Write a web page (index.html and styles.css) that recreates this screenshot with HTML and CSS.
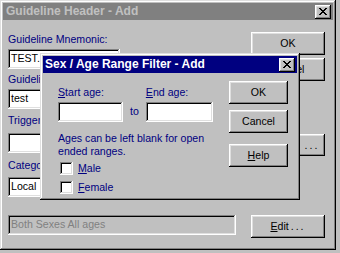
FILE: index.html
```html
<!DOCTYPE html>
<html lang="en">
<head>
    <meta charset="UTF-8">
    <title>Guideline Header - Add</title>
    <link rel="stylesheet" href="styles.css">
</head>
<body>
    <div class="window main-window">
        <div class="titlebar inactive">
            <span class="title">Guideline Header - Add</span>
            <span class="close-btn"><svg width="8" height="7" viewBox="0 0 8 7"><path d="M0 0h2v1H0zM6 0h2v1H6zM1 1h2v1H1zM5 1h2v1H5zM2 2h4v1H2zM3 3h2v1H3zM2 4h4v1H2zM1 5h2v1H1zM5 5h2v1H5zM0 6h2v1H0zM6 6h2v1H6z" fill="#000"/></svg></span>
        </div>
        <div class="main-body">
            <div class="top-section">
                <div class="fields">
                    <div class="label first">Guideline Mnemonic:</div>
                    <div class="textbox mnemonic">TEST.</div>
                    <div class="label">Guideline Description:</div>
                    <div class="textbox description">test</div>
                </div>
                <div class="side-buttons">
                    <div class="btn">OK</div>
                    <div class="btn cancel">Cancel</div>
                </div>
            </div>
            <div class="label trigger-label">Trigger:</div>
            <div class="trigger-row">
                <div class="textbox trigger"></div>
                <div class="btn dots"><span class="spaced">...</span></div>
            </div>
            <div class="label category-label">Category:</div>
            <div class="textbox combo">Local</div>
            <div class="filter-row">
                <div class="textbox disabled">Both Sexes All ages</div>
                <div class="btn"><u>E</u>dit<span class="spaced">...</span></div>
            </div>
        </div>
    </div>

    <!-- Sex / Age filter dialog -->
    <div class="window filter-window">
        <div class="titlebar">
            <span class="title">Sex / Age Range Filter - Add</span>
            <span class="close-btn"><svg width="8" height="7" viewBox="0 0 8 7"><path d="M0 0h2v1H0zM6 0h2v1H6zM1 1h2v1H1zM5 1h2v1H5zM2 2h4v1H2zM3 3h2v1H3zM2 4h4v1H2zM1 5h2v1H1zM5 5h2v1H5zM0 6h2v1H0zM6 6h2v1H6z" fill="#000"/></svg></span>
        </div>
        <div class="filter-body">
            <div class="filter-fields">
                <div class="age-row">
                    <div class="age-group start">
                        <div class="label"><u>S</u>tart age:</div>
                        <div class="textbox age-input"></div>
                    </div>
                    <div class="label to">to</div>
                    <div class="age-group end">
                        <div class="label"><u>E</u>nd age:</div>
                        <div class="textbox age-input"></div>
                    </div>
                </div>
                <div class="label note">Ages can be left blank for open ended ranges.</div>
                <div class="check-row">
                    <span class="checkbox"></span>
                    <span class="label"><u>M</u>ale</span>
                </div>
                <div class="check-row second">
                    <span class="checkbox"></span>
                    <span class="label"><u>F</u>emale</span>
                </div>
            </div>
            <div class="filter-buttons">
                <div class="btn">OK</div>
                <div class="btn cancel">Cancel</div>
                <div class="btn help"><u>H</u>elp</div>
            </div>
        </div>
    </div>
</body>
</html>
```

FILE: styles.css
```css
* {
    box-sizing: border-box;
}

body {
    margin: 0;
    width: 340px;
    height: 253px;
    overflow: hidden;
    position: relative;
    background-color: #c0c0c0;
    font-family: 'Liberation Sans', Arial, sans-serif;
    font-size: 10.6px;
    line-height: 13px;
    color: #000;
}

/* Window frames */
.window {
    position: absolute;
    background-color: #c0c0c0;
    padding: 3px;
    box-shadow: inset -1px -1px #000, inset 1px 1px #dfdfdf, inset -2px -2px #808080, inset 2px 2px #fff;
}

.main-window {
    left: 0;
    top: 0;
    width: 336px;
    height: 250px;
}

.filter-window {
    left: 40px;
    top: 53px;
    width: 260px;
    height: 147px;
}

.titlebar {
    height: 17px;
    display: flex;
    align-items: center;
    justify-content: space-between;
    padding: 0 2px 0 3px;
    background-color: #000080;
    color: #fff;
    font-size: 12px;
    font-weight: bold;
}

.filter-window .titlebar {
    padding-left: 2px;
}

.titlebar.inactive {
    background-color: #808080;
    color: #c0c0c0;
}

.close-btn {
    width: 16px;
    height: 14px;
    display: flex;
    align-items: center;
    justify-content: center;
    background-color: #c0c0c0;
    box-shadow: inset -1px -1px #000, inset 1px 1px #fff, inset -2px -2px #808080, inset 2px 2px #dfdfdf;
}

.close-btn svg {
    display: block;
    shape-rendering: crispEdges;
    margin-left: -1px;
}

/* Common controls */
.label {
    color: #000080;
    white-space: nowrap;
}

.btn {
    height: 23px;
    display: flex;
    align-items: center;
    justify-content: center;
    background-color: #c0c0c0;
    color: #000;
    box-shadow: inset -1px -1px #000, inset 1px 1px #fff, inset -2px -2px #808080, inset 2px 2px #dfdfdf;
}

.spaced {
    letter-spacing: 2px;
    margin-left: 2px;
}

.textbox {
    height: 20px;
    padding: 3px 3px 0;
    background-color: #fff;
    color: #000;
    box-shadow: inset -1px -1px #fff, inset 1px 1px #808080, inset -2px -2px #dfdfdf, inset 2px 2px #000;
}

/* Guideline header body */
.main-body {
    padding: 12px 8px 0 5px;
}

.top-section {
    display: flex;
    justify-content: space-between;
}

.fields {
    padding-top: 1px;
}

.fields .textbox {
    margin-top: 3px;
    margin-bottom: 4px;
}

.mnemonic {
    width: 112px;
}

.description {
    width: 220px;
}

.side-buttons {
    width: 74px;
}

.side-buttons .cancel {
    margin-top: 3px;
}

.trigger-label {
    margin-top: 1px;
}

.trigger-row {
    display: flex;
    gap: 5px;
    margin-top: 6px;
}

.trigger {
    flex: 1;
}

.dots {
    width: 28px;
    height: 22px;
    margin-top: 1px;
}

.category-label {
    margin-top: 3px;
}

.combo {
    width: 150px;
    margin-top: 5px;
}

.filter-row {
    display: flex;
    justify-content: space-between;
    align-items: flex-start;
    margin-top: 18px;
}

.filter-row .btn {
    width: 74px;
}

.disabled {
    width: 228px;
    background-color: #c0c0c0;
    color: #808080;
}

/* Sex / Age filter body */
.filter-body {
    display: flex;
    padding: 8px 9px 0 15px;
}

.filter-fields {
    flex: 1;
    padding-top: 5px;
}

.age-row {
    display: flex;
    align-items: flex-end;
}

.age-group .textbox {
    margin-top: 3px;
}

.start {
    width: 65px;
}

.end {
    width: 67px;
}

.to {
    margin: 0 7px 4px;
}

.note {
    width: 152px;
    margin-top: 10px;
    white-space: normal;
}

.check-row {
    display: flex;
    align-items: center;
    gap: 5px;
    height: 13px;
    margin-top: 4px;
    padding-left: 2px;
}

.check-row.second {
    margin-top: 6px;
}

.checkbox {
    width: 13px;
    height: 13px;
    background-color: #fff;
    box-shadow: inset -1px -1px #fff, inset 1px 1px #808080, inset -2px -2px #dfdfdf, inset 2px 2px #000;
}

.filter-buttons {
    width: 59px;
}

.filter-buttons .cancel {
    margin-top: 6px;
}

.filter-buttons .help {
    margin-top: 11px;
}
```
